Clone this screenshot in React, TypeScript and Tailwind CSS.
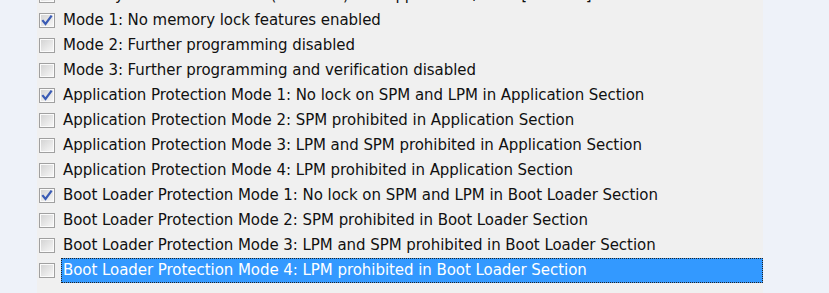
import React from "react";

type Row = { label: string; checked: boolean };

const rows: Row[] = [
  { label: "Memory lock bits: LB mode (Lock Bits) and application / boot [LB=0x3]", checked: false },
  { label: "Mode 1: No memory lock features enabled", checked: true },
  { label: "Mode 2: Further programming disabled", checked: false },
  { label: "Mode 3: Further programming and verification disabled", checked: false },
  { label: "Application Protection Mode 1: No lock on SPM and LPM in Application Section", checked: true },
  { label: "Application Protection Mode 2: SPM prohibited in Application Section", checked: false },
  { label: "Application Protection Mode 3: LPM and SPM prohibited in Application Section", checked: false },
  { label: "Application Protection Mode 4: LPM prohibited in Application Section", checked: false },
  { label: "Boot Loader Protection Mode 1: No lock on SPM and LPM in Boot Loader Section", checked: true },
  { label: "Boot Loader Protection Mode 2: SPM prohibited in Boot Loader Section", checked: false },
  { label: "Boot Loader Protection Mode 3: LPM and SPM prohibited in Boot Loader Section", checked: false },
  { label: "Boot Loader Protection Mode 4: LPM prohibited in Boot Loader Section", checked: false },
];

function Box({ checked }: { checked: boolean }) {
  return (
    <div className="w-[16px] h-[15px] shrink-0 border border-[#a0a0a0] bg-[#fbfbfb] p-[1px]">
      <div className="w-full h-full bg-gradient-to-br from-[#d4d4d4] to-[#f6f6f6] flex items-center justify-center">
        {checked && (
          <svg width="12" height="11" viewBox="0 0 12 11">
            <path d="M2 6 L4.5 9 L10 1.5" stroke="#3a5bb5" strokeWidth="2.2" fill="none" strokeLinecap="square" />
          </svg>
        )}
      </div>
    </div>
  );
}

export default function App() {
  return (
    <div
      className="w-[829px] h-[293px] overflow-hidden bg-[#eef2f9] flex"
      style={{ fontFamily: '"DejaVu Sans", Verdana, sans-serif' }}
    >
      <div className="w-[37px] shrink-0" />
      <div className="w-[726px] shrink-0 bg-[#f0f0f0] overflow-hidden">
        <div className="mt-[-17px] flex flex-col">
          {rows.map((r, i) => {
            const sel = i === rows.length - 1;
            return (
              <div key={i} className="h-[25px] flex items-center pl-[2px]">
                <Box checked={r.checked} />
                <div
                  className={
                    "ml-[6px] h-[25px] flex items-center whitespace-nowrap text-[15px] tracking-[-0.05px] " +
                    (sel
                      ? "flex-1 bg-[#3399ff] text-white border border-dotted border-[#222] pl-[1px]"
                      : "text-[#111] pl-[2px]")
                  }
                >
                  {r.label}
                </div>
              </div>
            );
          })}
        </div>
      </div>
    </div>
  );
}
